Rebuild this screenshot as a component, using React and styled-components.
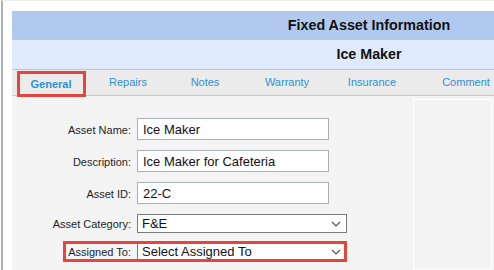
import React from "react";
import styled, { createGlobalStyle } from "styled-components";

const Global = createGlobalStyle`
  html, body {
    margin: 0;
    padding: 0;
    background: #fff;
    overflow: hidden;
    font-family: "Liberation Sans", Arial, sans-serif;
  }
`;

// outer frame with the grey edge on the left
const Page = styled.div`
  width: 494px;
  height: 270px;
  box-sizing: border-box;
  border-top: 1px solid #eeeeee;
  border-left: 2px solid #aab2bb;
  margin-left: 1px;
  padding: 10px 0 0 9px;
  overflow: hidden;
`;

const Panel = styled.div`
  width: 714px;
`;

const Title = styled.div`
  height: 29px;
  line-height: 29px;
  background: #b1c9ee;
  text-align: center;
  font-weight: bold;
  font-size: 14.3px;
  color: #111;
`;

const SubTitle = styled(Title)`
  background: #dfeafd;
  border-bottom: 1px solid #b5c8e2;
`;

const Tabs = styled.div`
  display: flex;
  height: 25px;
  background: #ebebeb;
  border-bottom: 1px solid #c9c9c9;
`;

const Tab = styled.div`
  flex: 0 0 ${(p) => p.$w}px;
  display: flex;
  justify-content: center;
  align-items: flex-start;
  font-size: 11px;
  color: #2f90d6;
  line-height: 25px;
`;

const TabLabel = styled.span`
  position: relative;
  z-index: 1;
  ${(p) =>
    p.$active &&
    `
    box-sizing: border-box;
    width: 69px;
    height: 26px;
    margin-top: 1px;
    line-height: 20px;
    text-align: center;
    font-weight: bold;
    border: 3px solid #e3463f;
  `}
`;

const Body = styled.div`
  display: flex;
  height: 180px;
  background: #f4f4f4;
`;

const Form = styled.div`
  flex: 0 0 401px;
  display: flex;
  flex-direction: column;
  padding-top: 22px;
`;

const Row = styled.div`
  display: flex;
  align-items: center;
  height: ${(p) => p.$h}px;
  margin-bottom: ${(p) => p.$gap}px;
`;

const MarkedRow = styled.div`
  display: flex;
  align-items: center;
  width: 284px;
  height: 21px;
  margin-left: 51px;
  outline: 3px solid #e3463f;
  outline-offset: -3px;
`;

const Label = styled.div`
  flex: 0 0 ${(p) => p.$w || 119}px;
  text-align: right;
  margin-right: 6px;
  font-size: 11px;
  color: #1e1e1e;
  padding-top: 1px;
`;

const Field = styled.div`
  box-sizing: border-box;
  width: 192px;
  height: 22px;
  padding: 2px 0 0 5px;
  background: #fff;
  border: 1px solid #a8b0ba;
  font-size: 13px;
  color: #111;
  line-height: 18px;
`;

const Select = styled.div`
  box-sizing: border-box;
  display: flex;
  align-items: center;
  justify-content: space-between;
  width: ${(p) => p.$w}px;
  height: ${(p) => p.$h}px;
  padding: 0 5px 0 4px;
  background: #fff;
  border: 1px solid #7a7a7a;
  font-size: 13px;
  color: #111;
`;

const Side = styled.div`
  flex: 0 0 77px;
  height: 169px;
  margin-top: 3px;
  border: 1px solid #ffffff;
`;

const Chevron = () => (
  <svg width="10" height="6" viewBox="0 0 10 6">
    <polyline points="1,1 5,5 9,1" fill="none" stroke="#555" strokeWidth="1.2" />
  </svg>
);

const tabs = [
  ["General", 78],
  ["Repairs", 76],
  ["Notes", 78],
  ["Warranty", 86],
  ["Insurance", 84],
  ["Comment", 104],
];

export default function App() {
  return (
    <>
      <Global />
      <Page>
        <Panel>
          <Title>Fixed Asset Information</Title>
          <SubTitle>Ice Maker</SubTitle>
          <Tabs>
            {tabs.map(([name, w], i) => (
              <Tab key={name} $w={w}>
                <TabLabel $active={i === 0}>{name}</TabLabel>
              </Tab>
            ))}
          </Tabs>
          <Body>
            <Form>
              <Row $h={22} $gap={10}>
                <Label>Asset Name:</Label>
                <Field>Ice Maker</Field>
              </Row>
              <Row $h={22} $gap={10}>
                <Label>Description:</Label>
                <Field>Ice Maker for Cafeteria</Field>
              </Row>
              <Row $h={22} $gap={10}>
                <Label>Asset ID:</Label>
                <Field>22-C</Field>
              </Row>
              <Row $h={19} $gap={8}>
                <Label>Asset Category:</Label>
                <Select $w={210} $h={19}>
                  F&amp;E
                  <Chevron />
                </Select>
              </Row>
              <MarkedRow>
                <Label $w={68}>Assigned To:</Label>
                <Select $w={210} $h={21}>
                  Select Assigned To
                  <Chevron />
                </Select>
              </MarkedRow>
            </Form>
            <Side />
          </Body>
        </Panel>
      </Page>
    </>
  );
}
